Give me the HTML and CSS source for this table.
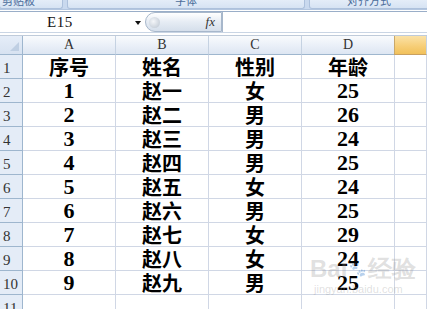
FILE: index.html
```html
<!DOCTYPE html>
<html lang="zh">
<head>
<meta charset="utf-8">
<title>Excel</title>
<link rel="stylesheet" href="styles.css">
</head>
<body>
<div class="app">
  <div class="ribbon">
    <div class="group g1"><span>剪贴板</span></div>
    <div class="group g2"><span>字体</span></div>
    <div class="group g3"><span>对齐方式</span></div>
  </div>
  <div class="fbar">
    <div class="namebox"><span class="ref">E15</span><span class="arrow"></span></div>
    <div class="pill"><span class="knob"></span><span class="fx">fx</span></div>
    <div class="input"></div>
  </div>
  <div class="sheet">
    <div class="corner"><span class="tri"></span></div>
    <div class="ch">A</div><div class="ch">B</div><div class="ch">C</div><div class="ch">D</div><div class="ch sel"></div>

    <div class="rh">1</div><div class="c zh">序号</div><div class="c zh">姓名</div><div class="c zh">性别</div><div class="c zh">年龄</div><div class="c"></div>
    <div class="rh">2</div><div class="c num">1</div><div class="c zh">赵一</div><div class="c zh">女</div><div class="c num">25</div><div class="c"></div>
    <div class="rh">3</div><div class="c num">2</div><div class="c zh">赵二</div><div class="c zh">男</div><div class="c num">26</div><div class="c"></div>
    <div class="rh">4</div><div class="c num">3</div><div class="c zh">赵三</div><div class="c zh">男</div><div class="c num">24</div><div class="c"></div>
    <div class="rh">5</div><div class="c num">4</div><div class="c zh">赵四</div><div class="c zh">男</div><div class="c num">25</div><div class="c"></div>
    <div class="rh">6</div><div class="c num">5</div><div class="c zh">赵五</div><div class="c zh">女</div><div class="c num">24</div><div class="c"></div>
    <div class="rh">7</div><div class="c num">6</div><div class="c zh">赵六</div><div class="c zh">男</div><div class="c num">25</div><div class="c"></div>
    <div class="rh">8</div><div class="c num">7</div><div class="c zh">赵七</div><div class="c zh">女</div><div class="c num">29</div><div class="c"></div>
    <div class="rh">9</div><div class="c num">8</div><div class="c zh">赵八</div><div class="c zh">女</div><div class="c num">24</div><div class="c"></div>
    <div class="rh">10</div><div class="c num">9</div><div class="c zh">赵九</div><div class="c zh">男</div><div class="c num">25</div><div class="c"></div>
    <div class="rh">11</div><div class="c"></div><div class="c"></div><div class="c"></div><div class="c"></div><div class="c"></div>
  </div>
  <div class="watermark">
    <div class="wm1">Bai<span class="paw">🐾</span>经验</div>
    <div class="wm2">jingyan.baidu.com</div>
  </div>
</div>
</body>
</html>
```
FILE: styles.css
```css
html, body {
  margin: 0;
  padding: 0;
  background: #ffffff;
}
.app {
  position: relative;
  width: 427px;
  height: 309px;
  overflow: hidden;
  font-family: "Liberation Serif", serif;
}
.ribbon {
  height: 10px;
  background: #c9d9ee;
  display: flex;
  gap: 4px;
  box-sizing: border-box;
  border-bottom: 1px solid #b3c6df;
}
.group {
  height: 9px;
  background: linear-gradient(#e4edf8, #d6e3f3);
  border: 1px solid #adc1dc;
  border-top: none;
  border-radius: 0 0 3px 3px;
  box-sizing: border-box;
  overflow: hidden;
  display: flex;
  justify-content: center;
  align-items: flex-end;
}
.group span {
  font-family: "Noto Sans CJK SC", sans-serif;
  font-size: 11px;
  line-height: 11px;
  color: #4a6c9a;
  margin-bottom: 2px;
}
.g1 { width: 64px; margin-left: -1px; justify-content: flex-start; padding-left: 2px; }
.g2 { width: 238px; }
.g3 { flex: 1; margin-right: -2px; }
.fbar {
  height: 22px;
  display: flex;
  background: #ffffff;
  border-top: 1px solid #9aaec8;
  border-bottom: 1px solid #c9d5e4;
  box-sizing: border-box;
  margin-top: 1px;
}
.namebox {
  width: 145px;
  position: relative;
  display: flex;
  align-items: center;
}
.ref {
  font-size: 15px;
  color: #111;
  margin-left: 47px;
  letter-spacing: 0.5px;
}
.arrow {
  position: absolute;
  left: 135px;
  top: 9px;
  width: 0;
  height: 0;
  border-left: 3px solid transparent;
  border-right: 3px solid transparent;
  border-top: 4px solid #111;
}
.pill {
  width: 77px;
  height: 20px;
  border: 1px solid #a7b7cb;
  border-radius: 10px 0 0 10px;
  background: linear-gradient(#ffffff, #e6ecf4 50%, #d5dfeb);
  box-sizing: border-box;
  display: flex;
  align-items: center;
  justify-content: space-between;
  padding: 0 4px 0 3px;
}
.knob {
  width: 11px;
  height: 11px;
  border-radius: 50%;
  background: radial-gradient(circle at 40% 40%, #f4f6f9, #b9c3cf);
}
.fx {
  font-family: "Liberation Serif", serif;
  font-style: italic;
  font-size: 13px;
  color: #333;
  margin-right: 2px;
}
.input {
  flex: 1;
  border-left: 1px solid #a7b7cb;
}
.sheet {
  margin-top: 2px;
  display: grid;
  grid-template-columns: 23px 93px 93px 93px 93px 1fr;
  grid-template-rows: 19px repeat(11, 24px);
  border-top: 1px solid #bfcbda;
}
.corner {
  background: linear-gradient(#e5edf8, #d7e2f1);
  border-right: 1px solid #9eb6ce;
  border-bottom: 1px solid #9eb6ce;
  box-sizing: border-box;
  position: relative;
}
.tri {
  position: absolute;
  right: 3px;
  bottom: 3px;
  width: 0;
  height: 0;
  border-left: 9px solid transparent;
  border-bottom: 9px solid #bfcfe3;
}
.ch {
  background: linear-gradient(#f9fbfd, #e8eef7 60%, #dde6f2);
  border-right: 1px solid #c5d2e2;
  border-bottom: 1px solid #9eb6ce;
  box-sizing: border-box;
  display: flex;
  align-items: center;
  justify-content: center;
  font-size: 14px;
  color: #333;
}
.ch.sel {
  background: linear-gradient(#fbe2a7, #f6cd75 60%, #f1c15b);
  border-left: 1px solid #c9a86a;
  margin-left: -1px;
  border-bottom-color: #c9a060;
}
.rh {
  background: #e4ecf7;
  border-right: 1px solid #9eb6ce;
  border-bottom: 1px solid #9eb6ce;
  box-sizing: border-box;
  display: flex;
  align-items: flex-end;
  padding: 0 0 2px 3px;
  font-size: 15px;
  line-height: 15px;
  color: #333;
}
.c {
  border-right: 1px solid #d0d7e5;
  border-bottom: 1px solid #d0d7e5;
  box-sizing: border-box;
  display: flex;
  align-items: center;
  justify-content: center;
  color: #000;
}
.zh {
  font-family: "Noto Sans CJK SC", sans-serif;
  font-weight: 700;
  font-size: 20px;
  line-height: 20px;
}
.num {
  font-family: "Liberation Serif", serif;
  font-weight: 700;
  font-size: 22px;
  line-height: 22px;
}
.watermark {
  position: absolute;
  left: 310px;
  top: 256px;
  color: rgba(150, 150, 150, 0.3);
  font-family: "Liberation Sans", sans-serif;
  pointer-events: none;
}
.wm1 {
  font-size: 24px;
  font-weight: 700;
  line-height: 26px;
  display: flex;
  align-items: center;
}
.wm1 .paw {
  font-size: 14px;
  margin: 0 2px;
}
.wm2 {
  font-size: 11px;
  margin-left: 4px;
  line-height: 14px;
}
```
